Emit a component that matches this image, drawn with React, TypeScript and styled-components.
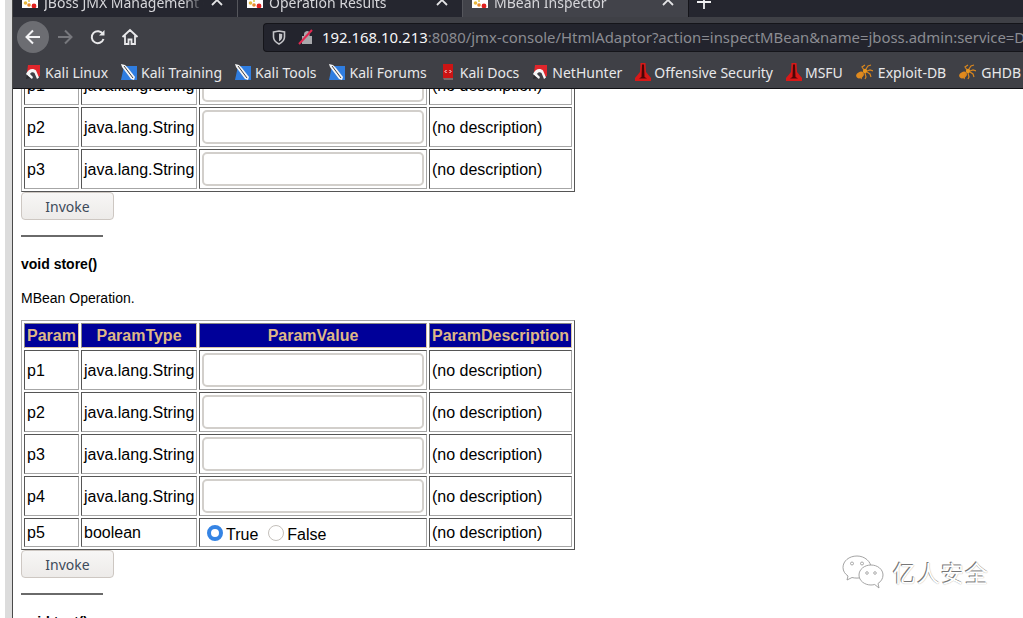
import React from 'react';
import styled, { createGlobalStyle } from 'styled-components';

const Global = createGlobalStyle`
  html, body { margin: 0; padding: 0; background: #fff; }
  #root { width: 1023px; height: 618px; overflow: hidden; }
`;

const Screen = styled.div`
  position: relative;
  display: flex;
  width: 1023px;
  height: 618px;
  overflow: hidden;
  background: #fff;
`;
const Gutter = styled.div`
  flex: none;
  width: 5px;
  background: #fff;
`;
const WindowEdge = styled.div`
  flex: none;
  width: 7px;
  background: #dcdcdc;
  border-right: 1px solid #4a4a4a;
`;
const Browser = styled.div`
  flex: 1;
  min-width: 0;
  display: flex;
  flex-direction: column;
`;
const Chrome = styled.div`
  flex: none;
  display: flex;
  flex-direction: column;
  font-family: "Noto Sans", sans-serif;
  color: #f2f2f4;
  background: #3f4046;
  border-bottom: 1px solid #101014;
`;
const TabStrip = styled.div`
  height: 17px;
  display: flex;
  align-items: flex-end;
  overflow: hidden;
  background: #25262f;
`;
const Tab = styled.div<{ $active?: boolean }>`
  flex: none;
  box-sizing: border-box;
  width: ${p => (p.$active ? 226 : 225)}px;
  height: 34px;
  padding: 0 9px;
  display: flex;
  align-items: center;
  gap: 6px;
  font-size: 14px;
  background: ${p => (p.$active ? '#42434a' : 'transparent')};
  border-right: 1px solid ${p => (p.$active ? '#15151a' : '#55565c')};
  color: #d6d6da;
`;
const TabTitle = styled.span`
  flex: 1;
  min-width: 0;
  padding-top: 4px;
  white-space: nowrap;
  overflow: hidden;
  -webkit-mask-image: linear-gradient(to right, #000 88%, transparent);
  mask-image: linear-gradient(to right, #000 88%, transparent);
`;
const PlusSlot = styled.div`
  width: 30px;
  height: 30px;
  display: flex;
  align-items: center;
  justify-content: center;
`;
const Toolbar = styled.div`
  height: 39px;
  display: flex;
  align-items: center;
  padding-left: 4px;
`;
const RoundButton = styled.div<{ $on?: boolean }>`
  flex: none;
  width: 32px;
  height: 32px;
  margin-top: 1px;
  border-radius: 50%;
  display: flex;
  align-items: center;
  justify-content: center;
  background: ${p => (p.$on ? '#6c6d72' : 'transparent')};
`;
const NavIcon = styled.div`
  flex: none;
  width: 32px;
  height: 32px;
  margin-top: 1px;
  margin-left: 0.5px;
  display: flex;
  align-items: center;
  justify-content: center;
`;
const UrlBar = styled.div`
  flex: 1;
  min-width: 0;
  height: 29px;
  margin: 1px 0 0 117px;
  box-sizing: border-box;
  display: flex;
  align-items: center;
  padding-left: 8px;
  background: #23242d;
  border: 1px solid #15151a;
  border-right: 0;
  border-radius: 4px 0 0 4px;
  overflow: hidden;
  white-space: nowrap;
  font-size: 14.9px;
`;
const UrlDivider = styled.div`
  width: 1px;
  height: 22px;
  margin: 0 6px;
  background: #4a4b52;
`;
const UrlHost = styled.span`
  margin-left: 8px;
  color: #f6f6f8;
`;
const UrlRest = styled.span`
  color: #8b8c92;
`;
const Bookmarks = styled.div`
  height: 32px;
  display: flex;
  align-items: center;
  gap: 13px;
  padding-left: 12px;
  overflow: hidden;
  white-space: nowrap;
  font-size: 14px;
`;
const Bookmark = styled.div`
  flex: none;
  display: flex;
  align-items: center;
  gap: 4px;
  color: #e8e8ea;
`;
const Page = styled.div`
  flex: 1;
  min-height: 0;
  overflow: hidden;
  padding-left: 8px;
  font-family: "Liberation Sans", Arial, sans-serif;
  color: #000;
`;
const ClippedStart = styled.div`
  margin-top: -27px;
`;
const ParamTable = styled.table`
  width: 554px;
  table-layout: fixed;
  border-collapse: separate;
  border-spacing: 2px;
  border: 1px solid;
  border-color: #a6a6a6 #555 #555 #a6a6a6;
  font-size: 16px;
`;
const HeadCell = styled.th`
  height: 23px;
  padding: 0 1px;
  background: #000099;
  color: #deb887;
  font-size: 16px;
  font-weight: 700;
  text-align: center;
  white-space: nowrap;
  border: 1px solid;
  border-color: #888 #d8c4a4 #d8c4a4 #888;
`;
const Cell = styled.td<{ $short?: boolean }>`
  height: ${p => (p.$short ? 27 : 37)}px;
  padding: ${p => (p.$short ? '0 2px' : '1px 2px 0')};
  white-space: nowrap;
  border: 1px solid;
  border-color: #555 #a6a6a6 #a6a6a6 #555;
`;
const TextBox = styled.input`
  display: block;
  box-sizing: border-box;
  width: 222px;
  height: 34px;
  margin: -1px 0 0;
  border: 2px solid #d2cfcb;
  border-radius: 5px;
  background: #fff;
  outline: 0;
`;
const RadioRow = styled.div`
  display: flex;
  align-items: center;
  padding: 4px 0 0 5px;
`;
const Radio = styled.span<{ $on?: boolean }>`
  flex: none;
  box-sizing: border-box;
  width: 16px;
  height: 16px;
  margin: -4px 3px 0 0;
  border-radius: 50%;
  background: #fff;
  border: ${p => (p.$on ? '4px solid #3584e4' : '1px solid #c4c0bb')};
`;
const RadioLabel = styled.span`
  margin-right: 10px;
`;
const InvokeButton = styled.button`
  display: block;
  box-sizing: border-box;
  width: 93px;
  height: 28px;
  margin: 0;
  padding: 0;
  border: 1px solid #cdc7c2;
  border-radius: 4px;
  background: linear-gradient(#f7f6f5, #edebe9);
  color: #3d4a5a;
  font-family: "Noto Sans", sans-serif;
  font-size: 14px;
`;
const Rule = styled.div`
  width: 82px;
  height: 2px;
  margin: 15px 0 0;
  background: #6a6a6a;
`;
const OpName = styled.p`
  margin: 19px 0 0;
  font-size: 14px;
  line-height: 16px;
  font-weight: 700;
`;
const OpNote = styled.p`
  margin: 18px 0 14px;
  font-size: 14px;
  line-height: 16px;
`;
const Watermark = styled.div`
  position: absolute;
  left: 842px;
  top: 555px;
  display: flex;
  align-items: center;
  gap: 9px;
`;
const WatermarkText = styled.span`
  font-family: "Noto Sans CJK SC", sans-serif;
  font-size: 23px;
  letter-spacing: 1px;
  color: #fff;
  text-shadow: -1px -1px 0 #777, 0 0 1px #999;
`;

const Favicon = () => (
  <svg width="16" height="16" viewBox="0 0 16 16" style={{ flex: 'none' }}>
    <rect width="16" height="16" fill="#fff" />
    <circle cx="3.500" cy="11" r="1.800" fill="#e8b93d" />
    <circle cx="7" cy="13" r="1.800" fill="#e88a2d" />
    <circle cx="12" cy="14" r="2.400" fill="#e01f1f" />
    <circle cx="7" cy="9" r="1" fill="#d8c94a" />
  </svg>
);
const Close = () => (
  <svg width="14" height="14" viewBox="0 0 14 14" style={{ flex: 'none', marginRight: 4 }}>
    <path d="M2 2l10 10M12 2L2 12" stroke="#e4e4e6" strokeWidth="1.800" />
  </svg>
);
const Back = () => (
  <svg width="18" height="18" viewBox="0 0 18 18">
    <path d="M16 9H3M9 2.500L2.500 9 9 15.500" fill="none" stroke="#f4f4f6" strokeWidth="2" />
  </svg>
);
const Forward = () => (
  <svg width="18" height="18" viewBox="0 0 18 18">
    <path d="M2 9h13M9 2.500L15.500 9 9 15.500" fill="none" stroke="#77787d" strokeWidth="2" />
  </svg>
);
const Reload = () => (
  <svg width="18" height="18" viewBox="0 0 18 18">
    <path d="M14.500 11a6 6 0 1 1-.6-5" fill="none" stroke="#e8e8ea" strokeWidth="2" />
    <path d="M15.500 2v5.500H10z" fill="#e8e8ea" />
  </svg>
);
const Home = () => (
  <svg width="18" height="18" viewBox="0 0 18 18">
    <path d="M1.500 9L9 2l7.500 7M4 7.500V16h3.500v-4.500h3V16H14V7.500" fill="none" stroke="#e8e8ea" strokeWidth="1.800" />
  </svg>
);
const Shield = () => (
  <svg width="14" height="15" viewBox="0 0 14 15" style={{ flex: 'none' }}>
    <path d="M1.500 2L7 1l5.500 1v5c0 3.500-2.500 5.500-5.500 7C4 12.500 1.500 10.500 1.500 7z" fill="none" stroke="#c4c4c8" strokeWidth="1.600" />
    <path d="M7 3.500l3.200.6v3c0 2-1.400 3.200-3.200 4.200z" fill="#c4c4c8" />
  </svg>
);
const BrokenLock = () => (
  <svg width="16" height="16" viewBox="0 0 16 16" style={{ flex: 'none' }}>
    <path d="M4 15V7h2V5a3 3 0 0 1 5.500-1.500V7H14v8z" fill="#a8a8ac" />
    <path d="M1 15L14 1" stroke="#e22850" strokeWidth="2" />
  </svg>
);
const KaliMark = () => (
  <svg width="16" height="16" viewBox="0 0 16 16" style={{ flex: 'none' }}>
    <path d="M3 1h12v11l-3 1-1-5C8 5 5 6 2 9z" fill="#e0262c" />
    <path d="M1 10C3 5 8 3.500 11 6.500l3 7-2 1.500-2.500-6C8 7.500 6 8 5 10l3 3-1 2-4-3z" fill="#f6f6f6" />
    <path d="M2 11l-1 4 4-1z" fill="#2a2a2e" />
  </svg>
);
const KaliBlue = () => (
  <svg width="16" height="16" viewBox="0 0 16 16" style={{ flex: 'none' }}>
    <path d="M3 2h13v14H0z" fill="#2f7de0" />
    <path d="M0 0l4 1 3 3 7 9-1 3-3-1L4 7 1 3z" fill="#f6f6f6" />
    <path d="M3 2l9 12" stroke="#3c3c40" strokeWidth="1" />
  </svg>
);
const DocBook = () => (
  <svg width="16" height="16" viewBox="0 0 16 16" style={{ flex: 'none' }}>
    <path d="M3 0h10v14H3z" fill="#cc1414" />
    <path d="M3 14h10v2H4z" fill="#7a6a6a" />
    <path d="M6.500 6L5 7.500 6.500 9M9.500 6L11 7.500 9.500 9" fill="none" stroke="#fff" strokeWidth="1" />
  </svg>
);
const OffsecMark = () => (
  <svg width="16" height="18" viewBox="0 0 16 18" style={{ flex: 'none', marginRight: -1 }}>
    <path d="M5.500 0h5l.5 9 5 6v3H0v-3l5-6z" fill="#d81818" />
    <path d="M7 1.500h2L9.500 14 12 15.500H4L6.500 14z" fill="#4a0606" />
  </svg>
);
const Spider = () => (
  <svg width="18" height="16" viewBox="0 0 18 16" style={{ flex: 'none', marginRight: 1, marginLeft: -1 }}>
    <ellipse cx="5" cy="11" rx="4" ry="3" fill="#e08a1e" transform="rotate(-30 5 11)" />
    <circle cx="10" cy="7" r="2.200" fill="#e8961e" />
    <g fill="none" stroke="#d9861e" strokeWidth="1.200">
      <path d="M9 6L7 3l3-2M11 5l2-3 3-1M12 7l3-1 3 1M12 8l3 2 1 3M10 9l1 4 -1 2M8 9L6 15" />
    </g>
  </svg>
);
const Plus = () => (
  <svg width="14" height="14" viewBox="0 0 14 14">
    <path d="M7 0v14M0 7h14" stroke="#f0f0f2" strokeWidth="1.800" />
  </svg>
);
const WeChat = () => (
  <svg width="42" height="34" viewBox="0 0 42 34">
    <g fill="#fff" stroke="#9a9a9a" strokeWidth="0.900">
      <path d="M15 1C7 1 1 6 1 12.500c0 3.500 2 6.500 5 8.500l-1 4 5-2.500c1.500.4 3 .6 5 .6 8 0 14-5 14-10.600S23 1 15 1z" />
      <path d="M29 10c-6.500 0-12 4.300-12 10s5.500 10 12 10c1.300 0 2.500-.2 3.700-.5L37 33l-1-4.500c3-1.900 5-5 5-8.500 0-5.700-5.500-10-12-10z" />
    </g>
    <g fill="#fff" stroke="#888" strokeWidth="0.700">
      <circle cx="10" cy="8.500" r="1.500" /><circle cx="20" cy="8.500" r="1.500" />
      <circle cx="25" cy="18" r="1.300" /><circle cx="33" cy="18" r="1.300" />
    </g>
  </svg>
);

const tabs = ['JBoss JMX Management Console', 'Operation Results', 'MBean Inspector'];
const marks: [React.ComponentType, string][] = [
  [KaliMark, 'Kali Linux'],
  [KaliBlue, 'Kali Training'],
  [KaliBlue, 'Kali Tools'],
  [KaliBlue, 'Kali Forums'],
  [DocBook, 'Kali Docs'],
  [KaliMark, 'NetHunter'],
  [OffsecMark, 'Offensive Security'],
  [OffsecMark, 'MSFU'],
  [Spider, 'Exploit-DB'],
  [Spider, 'GHDB'],
];

const Columns = () => (
  <colgroup>
    <col style={{ width: 55 }} />
    <col style={{ width: 116 }} />
    <col style={{ width: 228 }} />
    <col />
  </colgroup>
);

const StringRow = ({ name }: { name: string }) => (
  <tr>
    <Cell>{name}</Cell>
    <Cell>java.lang.String</Cell>
    <Cell><TextBox /></Cell>
    <Cell>(no description)</Cell>
  </tr>
);

export default function App() {
  return (
    <Screen>
      <Global />
      <Gutter />
      <WindowEdge />
      <Browser>
        <Chrome>
          <TabStrip>
            {tabs.map((t, i) => (
              <Tab key={t} $active={i === 2}>
                <Favicon />
                <TabTitle>{t}</TabTitle>
                <Close />
              </Tab>
            ))}
            <PlusSlot><Plus /></PlusSlot>
          </TabStrip>
          <Toolbar>
            <RoundButton $on><Back /></RoundButton>
            <RoundButton><Forward /></RoundButton>
            <NavIcon><Reload /></NavIcon>
            <NavIcon><Home /></NavIcon>
            <UrlBar>
              <Shield />
              <UrlDivider />
              <BrokenLock />
              <UrlHost>192.168.10.213</UrlHost>
              <UrlRest>:8080/jmx-console/HtmlAdaptor?action=inspectMBean&amp;name=jboss.admin:service=DeploymentFileRepository</UrlRest>
            </UrlBar>
          </Toolbar>
          <Bookmarks>
            {marks.map(([Icon, label]) => (
              <Bookmark key={label}>
                <Icon />
                {label}
              </Bookmark>
            ))}
          </Bookmarks>
        </Chrome>
        <Page>
          <ClippedStart>
            <ParamTable>
              <Columns />
              <tbody>
                <StringRow name="p1" />
                <StringRow name="p2" />
                <StringRow name="p3" />
              </tbody>
            </ParamTable>
          </ClippedStart>
          <InvokeButton>Invoke</InvokeButton>
          <Rule />
          <OpName>void store()</OpName>
          <OpNote>MBean Operation.</OpNote>
          <ParamTable>
            <Columns />
            <thead>
              <tr>
                <HeadCell>Param</HeadCell>
                <HeadCell>ParamType</HeadCell>
                <HeadCell>ParamValue</HeadCell>
                <HeadCell>ParamDescription</HeadCell>
              </tr>
            </thead>
            <tbody>
              <StringRow name="p1" />
              <StringRow name="p2" />
              <StringRow name="p3" />
              <StringRow name="p4" />
              <tr>
                <Cell $short>p5</Cell>
                <Cell $short>boolean</Cell>
                <Cell $short>
                  <RadioRow>
                    <Radio $on />
                    <RadioLabel>True</RadioLabel>
                    <Radio />
                    <span>False</span>
                  </RadioRow>
                </Cell>
                <Cell $short>(no description)</Cell>
              </tr>
            </tbody>
          </ParamTable>
          <InvokeButton>Invoke</InvokeButton>
          <Rule />
          <OpName>void test()</OpName>
        </Page>
      </Browser>
      <Watermark>
        <WeChat />
        <WatermarkText>亿人安全</WatermarkText>
      </Watermark>
    </Screen>
  );
}
